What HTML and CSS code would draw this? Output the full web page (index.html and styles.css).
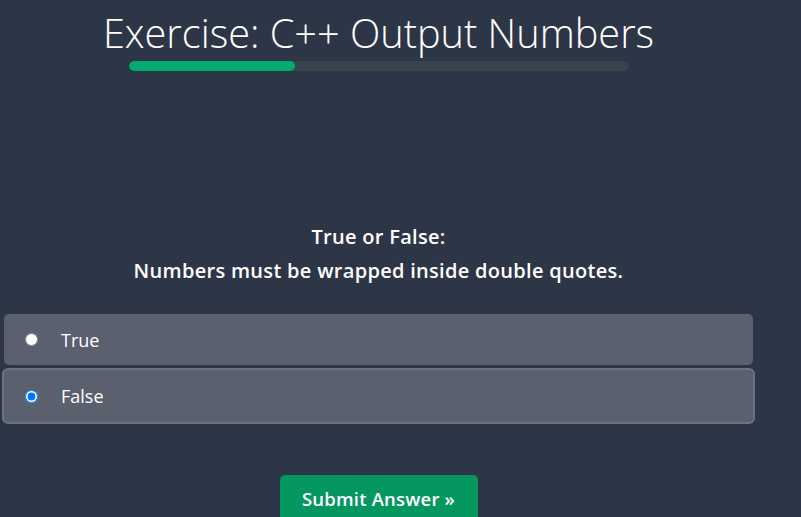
FILE: index.html
```html
<!DOCTYPE html>
<html>
<head>
<meta charset="utf-8">
<link rel="stylesheet" href="styles.css">
</head>
<body>
<div class="page">
  <h1 class="title">Exercise: C++ Output Numbers</h1>
  <div class="progress"><div class="progress-fill" style="width:33.3%"></div></div>
  <div class="question">
    <p class="q-line">True or False:</p>
    <p class="q-line">Numbers must be wrapped inside double quotes.</p>
  </div>
  <div class="options">
    <label class="option">
      <input type="radio" name="ans" class="radio">
      <span class="opt-text">True</span>
    </label>
    <label class="option selected">
      <input type="radio" name="ans" class="radio" checked>
      <span class="opt-text">False</span>
    </label>
  </div>
  <div class="actions">
    <button class="submit">Submit Answer »</button>
  </div>
</div>
</body>
</html>
```
FILE: styles.css
```css
html, body {
  margin: 0;
  padding: 0;
  background: #2d3647;
  color: #fff;
  height: 100%;
  overflow: hidden;
}
.page {
  width: 757px;
  display: flex;
  flex-direction: column;
  align-items: center;
}
.title {
  margin: 8px 0 0;
  font-family: "Open Sans", sans-serif;
  font-weight: 300;
  font-size: 39.7px;
  line-height: 50px;
}
.progress {
  width: 500px;
  height: 10px;
  margin-top: 3px;
  background: #38444d;
  border-radius: 5px;
  overflow: hidden;
}
.progress-fill {
  height: 100%;
  background: #04aa6d;
  border-radius: 5px;
}
.question {
  margin-top: 149px;
  text-align: center;
  font-family: "Open Sans", sans-serif;
  font-weight: 600;
  font-size: 20px;
  letter-spacing: 0.3px;
}
.q-line {
  margin: 0;
  line-height: 34px;
}
.options {
  margin-top: 26px;
  width: 753px;
  display: flex;
  flex-direction: column;
  gap: 3px;
}
.option {
  display: flex;
  align-items: center;
  height: 51px;
  margin: 0 2px;
  background: #5a606d;
  border-radius: 5px;
  font-family: "Open Sans", sans-serif;
  font-size: 18px;
  color: #fff;
}
.option.selected {
  margin: 0;
  height: 52px;
  border: 2px solid #6c7380;
  border-radius: 6px;
}
.radio {
  margin: 0 0 0 21px;
  width: 13px;
  height: 13px;
}
.opt-text {
  margin-left: 23px;
}
.actions {
  margin-top: 51px;
}
.submit {
  width: 198px;
  height: 48px;
  padding: 0 0 2px;
  background: #04975f;
  color: #fff;
  border: none;
  border-radius: 5px;
  font-family: "Open Sans", sans-serif;
  font-weight: 600;
  font-size: 18.5px;
  letter-spacing: 0.2px;
}
```
